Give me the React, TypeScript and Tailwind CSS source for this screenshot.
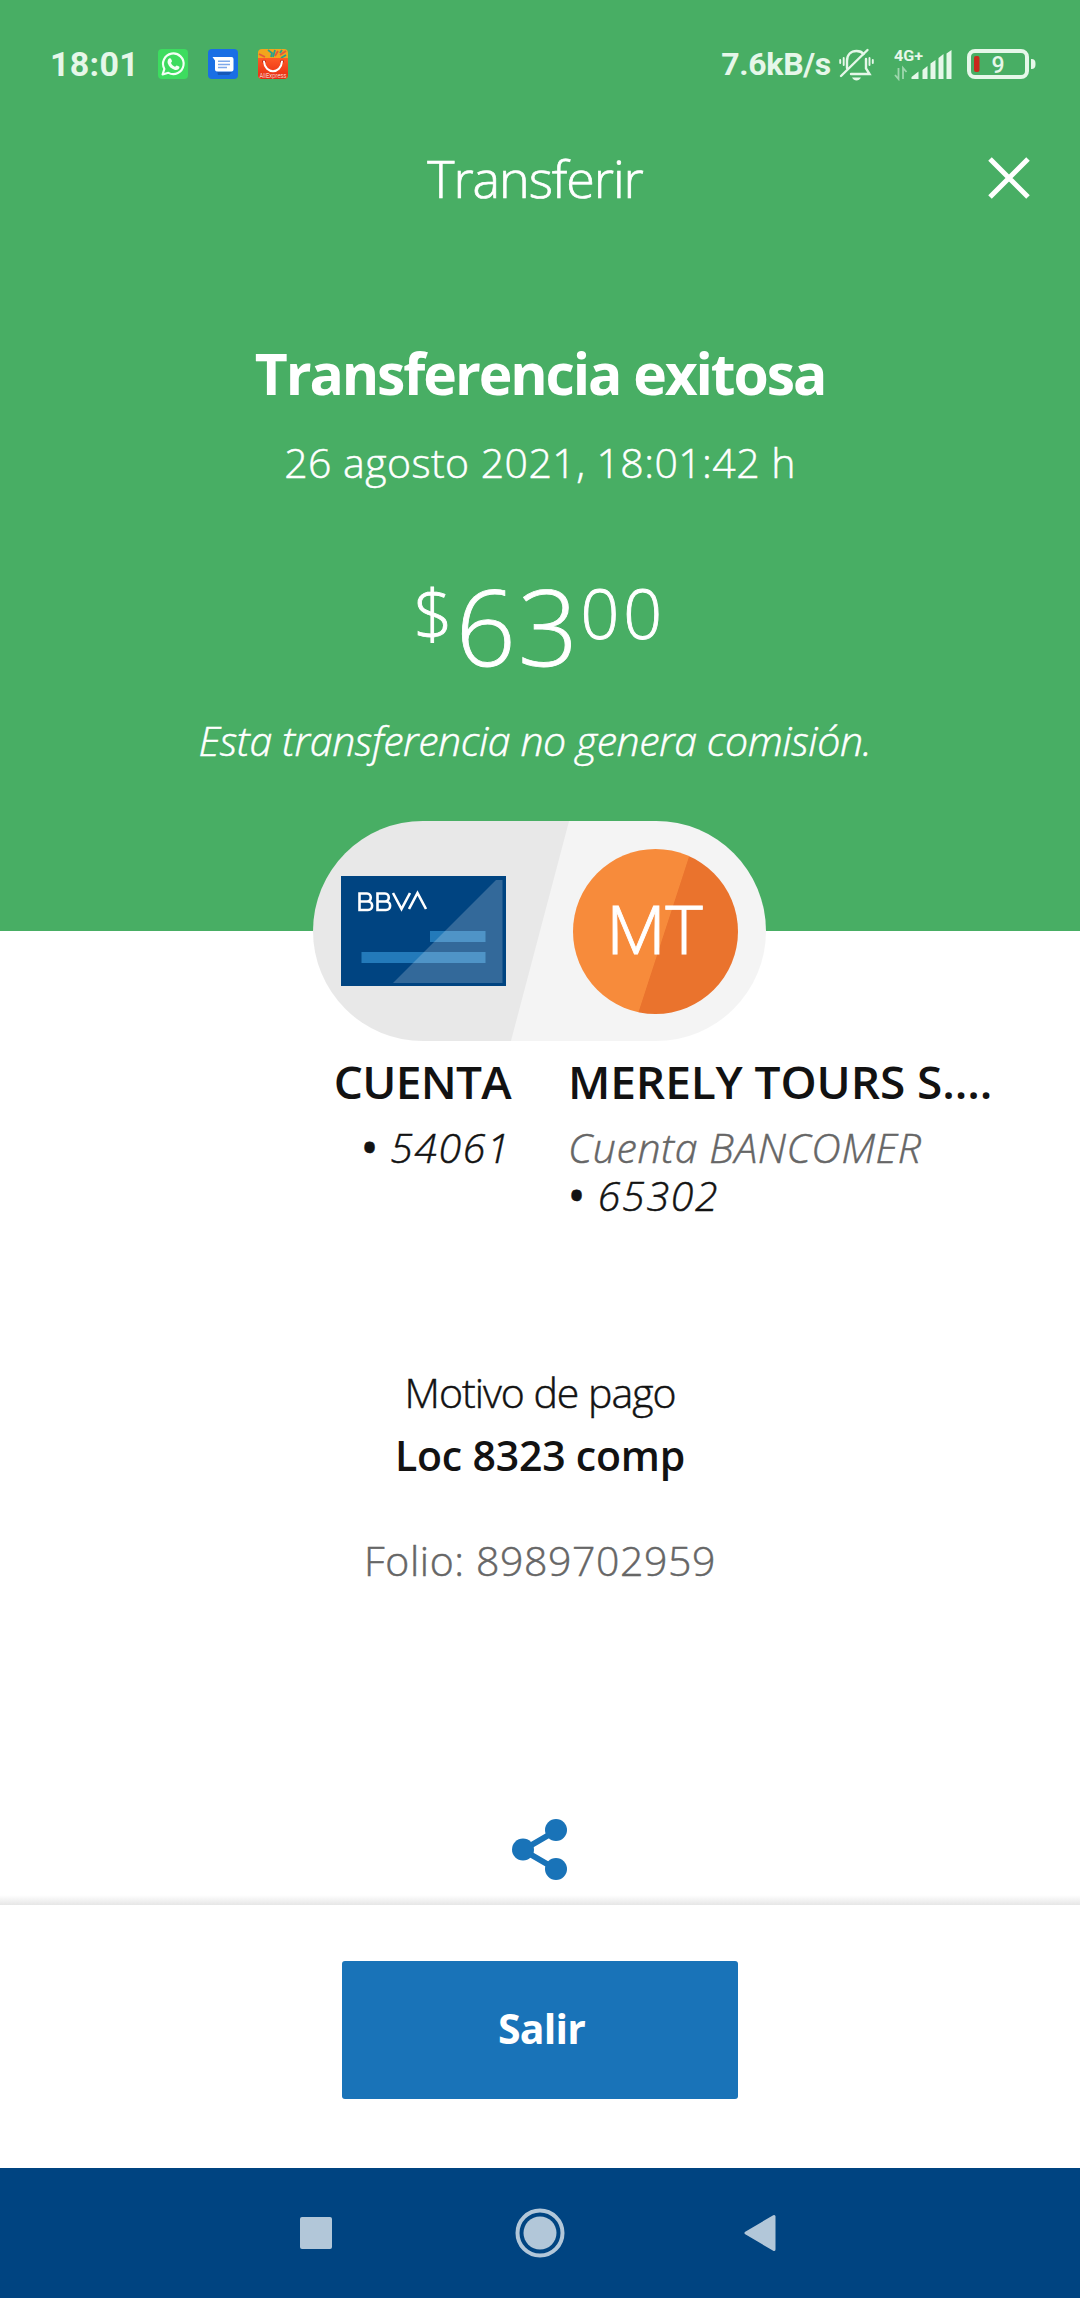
import React from 'react';

const StatusBar = () => (
  <div className="h-[128px] flex items-center pl-[50px] pr-[44px] text-left text-[#e6f7e9] font-['Roboto',sans-serif]">
    <span className="w-[108px] text-[34px] font-bold leading-none tracking-[0.3px]">18:01</span>

    <div className="flex gap-5">
      {/* WhatsApp */}
      <svg width="30" height="30" viewBox="0 0 30 30">
        <rect width="30" height="30" rx="4" fill="#3ddc5f" />
        <path d="M4.600 25.400l1.800-5.500a10.300 10.300 0 1 1 4 3.900z" fill="none" stroke="#f4fff6" strokeWidth="2.100" strokeLinejoin="round" />
        <path d="M11.500 9.300c.6-.3 1.200-.2 1.500.4l1 2.300c.2.6-.9 1.500-1 2 .8 1.700 2.100 2.900 3.900 3.700.6 0 1.300-1.400 1.900-1.300l2.300 1.200c.5.3.4.900.2 1.500-.6 1.700-2.600 2.300-4.300 1.800-3.900-1.200-6.100-3.400-7.300-6.700-.5-1.900.3-4.100 1.800-4.900z" fill="#f4fff6" />
      </svg>
      {/* Messages */}
      <svg width="30" height="30" viewBox="0 0 30 30">
        <rect width="30" height="30" rx="4" fill="#1a6fe4" />
        <path d="M7 12l3 11h14l-3 3H10z" fill="#1558b8" />
        <path d="M4.500 8H23.500a2 2 0 0 1 2 2V20.500a2 2 0 0 1-2 2H9a2 2 0 0 1-2-2V11.500z" fill="#fff" />
        <path d="M10 12.200h12M10 15.400h12M10 18.600h9" stroke="#7fa9ea" strokeWidth="1.500" />
      </svg>
      {/* AliExpress */}
      <svg width="30" height="30" viewBox="0 0 30 30">
        <defs>
          <linearGradient id="bag" x1="0" y1="0" x2="0" y2="1">
            <stop offset="0" stopColor="#ff5a26" />
            <stop offset="1" stopColor="#e52a10" />
          </linearGradient>
        </defs>
        <rect width="30" height="30" rx="4" fill="#f2a51c" />
        <path d="M1 5l6 3M20 2l-3 5M28 2l-6 4" stroke="#e5583c" strokeWidth="1.800" />
        <path d="M10 1l4 3-1 4M17 1l-2 7M24 1l-2 3M28 6l-5 3" stroke="#2ba08c" strokeWidth="1.800" fill="none" />
        <path d="M0 9h30v17a4 4 0 0 1-4 4H4a4 4 0 0 1-4-4z" fill="url(#bag)" />
        <circle cx="6" cy="12.500" r="1.800" fill="#b81c0c" />
        <circle cx="24" cy="12.500" r="1.800" fill="#b81c0c" />
        <path d="M6 12.500c1 13 17 13 18 0" fill="none" stroke="#fff" strokeWidth="2" strokeLinecap="round" />
        <text x="1.500" y="29" fontSize="6.500" fill="#fff" textLength="27" lengthAdjust="spacingAndGlyphs">AliExpress</text>
      </svg>
    </div>

    <span className="ml-auto text-[32px] font-bold leading-none tracking-[-0.3px]">7.6kB/s</span>
    {/* Silent mode bell */}
    <svg className="ml-2" width="35" height="33" viewBox="0 0 35 33" fill="none" stroke="currentColor" strokeWidth="2.400" strokeLinecap="round">
      <path d="M8 20v-7C8 6.500 12 3 17.500 3c3 0 5.500 1 7 3M27 11v9.500l3.500 5.500H12" />
      <path d="M2 28L28.500 2" />
      <path d="M4.700 10v7M1.200 12v3M30.500 10v7M33.800 12v3" strokeWidth="1.900" />
      <path d="M13 29.500h9c-2 4-7 4-9 0z" fill="currentColor" stroke="none" />
    </svg>
    {/* Mobile signal */}
    <svg className="ml-5" width="58" height="33" viewBox="0 0 58 33" fill="currentColor">
      <text x="0" y="12.500" fontSize="15.500" fontWeight="700" textLength="29" lengthAdjust="spacingAndGlyphs">4G+</text>
      <path d="M17.500 31v-2l7-5.500V31zM28.500 22l5-4v13h-5zM36.500 15.500l5-3.500v19h-5zM44.500 10l5-4v25h-5zM52.500 5.500l5-3.500v29h-5z" />
      <path d="M4.500 20v11l-3.500-4M9 31V20l3.500 4" fill="none" stroke="currentColor" strokeWidth="1.800" opacity=".55" />
    </svg>
    {/* Battery */}
    <svg className="ml-[15px]" width="69" height="30" viewBox="0 0 69 30">
      <rect x="2" y="2" width="58" height="26" rx="6" fill="none" stroke="currentColor" strokeWidth="4" />
      <path d="M64 10c3 0 4.500 1 4.500 5s-1.500 5-4.500 5z" fill="currentColor" />
      <rect x="7" y="7" width="5.500" height="16" rx="2" fill="#c92a1c" />
      <text x="31" y="23.500" textAnchor="middle" fontSize="23" fontWeight="500" fill="currentColor">9</text>
    </svg>
  </div>
);

const BankCard = () => (
  <svg width="165" height="110" viewBox="0 0 165 110">
    <rect width="165" height="110" fill="#004481" />
    <g fill="none" stroke="#fff" strokeWidth="2.600">
      <path d="M18.500 17.500V34H27c5.500 0 5.500-8.500 0-8.500h-8.500H26c5 0 5-8 0-8z" />
      <path d="M36.500 17.500V34H45c5.500 0 5.500-8.500 0-8.500h-8.500H44c5 0 5-8 0-8z" />
      <path d="M52 17l8.500 16L69 17M68 33l8.500-16L85 33" />
    </g>
    <path d="M89 55h55.500v11H89zM20.500 76h124v11h-124z" fill="#237aba" />
    <path d="M155 4h6.500v103H52z" fill="#fff" opacity=".2" />
  </svg>
);

const Avatar = () => (
  <div className="w-[165px] h-[165px] rounded-full flex items-center justify-center bg-[linear-gradient(108deg,#f78b3b_54%,#ea732d_54.4%)]">
    <span className="font-['Roboto',sans-serif] font-light text-[67px] leading-none text-white [-webkit-text-stroke:0.8px]">MT</span>
  </div>
);

const ShareIcon = () => (
  <svg width="56" height="62" viewBox="0 0 56 62" fill="#1973b8">
    <path d="M44.500 11.500L11 31l33.500 19.500" fill="none" stroke="#1973b8" strokeWidth="6" />
    <circle cx="11" cy="30.500" r="11" />
    <circle cx="44" cy="11" r="11" />
    <circle cx="44" cy="50" r="11" />
  </svg>
);

const App = () => {
  return (
    <div className="w-[1080px] h-[2298px] flex flex-col bg-white text-[#121212] font-['Open_Sans',sans-serif] font-light overflow-hidden">
      <header className="h-[931px] shrink-0 bg-[#48ae64] text-white text-center">
        <StatusBar />
        <div className="h-[100px] grid grid-cols-[110px_1fr_120px] items-center">
          <h1 className="col-start-2 pb-px text-[52px] leading-[72px] tracking-[-1.1px] [-webkit-text-stroke:0.7px]">Transferir</h1>
          <button className="flex justify-end pr-[50px]">
            <svg width="42" height="42" viewBox="0 0 42 42" stroke="#fff" strokeWidth="5">
              <path d="M2 2l38 38M40 2L2 40" />
            </svg>
          </button>
        </div>

        <h2 className="mt-[109px] text-[57px] leading-[72px] font-bold tracking-[-2.1px]">Transferencia exitosa</h2>
        <p className="mt-[23px] text-[41px] leading-[60px] tracking-[0.45px] [-webkit-text-stroke:0.5px]">26 agosto 2021, 18:01:42 h</p>
        <div className="mt-[79px] h-[110px] flex items-start justify-center [-webkit-text-stroke:0.9px]">
          <span className="pr-[3px] text-[68px] leading-[84px]">$</span>
          <span className="text-[105px] leading-[110px] tracking-[2.5px]">63</span>
          <span className="text-[68px] leading-[84px] tracking-[4px]">00</span>
        </div>
        <p className="mt-[29px] pr-[10px] text-[41px] leading-[60px] italic tracking-[-0.4px] [-webkit-text-stroke:0.5px]">Esta transferencia no genera comisión.</p>
      </header>

      <main className="relative -mt-[110px] grow flex flex-col items-center">
        <div className="w-[453px] h-[220px] mr-px shrink-0 rounded-full flex items-center justify-between px-7 bg-[linear-gradient(104.8deg,#e8e8e8_50%,#f4f4f4_50.2%)]">
          <BankCard />
          <Avatar />
        </div>

        <div className="w-full mt-[10px] grid grid-cols-[511px_1fr] gap-x-[57px]">
          <div className="text-right">
            <p className="text-[46px] leading-[60px] font-semibold tracking-[-0.7px]">CUENTA</p>
            <p className="mt-3 text-[41px] leading-[48px] italic tracking-[1.6px] [-webkit-text-stroke:0.5px]">
              <span className="font-semibold">•</span> 54061
            </p>
          </div>
          <div>
            <p className="text-[46px] leading-[60px] font-semibold tracking-[-0.1px] whitespace-nowrap">MERELY TOURS S....</p>
            <p className="mt-3 text-[41px] leading-[48px] italic tracking-[0.6px] text-[#666] [-webkit-text-stroke:0.5px]">Cuenta BANCOMER</p>
            <p className="text-[41px] leading-[48px] italic tracking-[1.8px] [-webkit-text-stroke:0.5px]">
              <span className="font-semibold">•</span> 65302
            </p>
          </div>
        </div>

        <div className="mt-[143px] text-center text-[41px] leading-[60px]">
          <p className="tracking-[-1px] [-webkit-text-stroke:0.5px]">Motivo de pago</p>
          <p className="mt-[3px] font-semibold tracking-[-0.2px]">Loc 8323 comp</p>
          <p className="mt-[45px] tracking-[0.6px] text-[#666] [-webkit-text-stroke:0.5px]">Folio: 8989702959</p>
        </div>

        <button className="mt-[229px]">
          <ShareIcon />
        </button>
      </main>

      <div className="h-[10px] shrink-0 bg-linear-to-b from-white to-[#e6e6e6]" />
      <footer className="h-[263px] shrink-0 flex items-start justify-center pt-[56px]">
        <button className="w-[396px] h-[138px] pl-[3px] pb-[2px] rounded-[3px] bg-[#1973b8] text-white text-[41px] font-bold tracking-[-0.8px]">Salir</button>
      </footer>

      <nav className="h-[130px] shrink-0 bg-[#004481] flex items-center justify-between pl-[300px] pr-[304px]">
        <div className="w-8 h-8 rounded-[2px] bg-[#b2c7d9]" />
        <svg className="ml-[3px]" width="50" height="50" viewBox="0 0 50 50">
          <circle cx="25" cy="25" r="22.500" fill="none" stroke="#b2c7d9" strokeWidth="4" />
          <circle cx="25" cy="25" r="16.500" fill="#b2c7d9" />
        </svg>
        <svg width="32" height="38" viewBox="0 0 32 38">
          <path d="M2 19L30 2.500v33z" fill="#b2c7d9" stroke="#b2c7d9" strokeWidth="3" strokeLinejoin="round" />
        </svg>
      </nav>
    </div>
  );
};

export default App;
